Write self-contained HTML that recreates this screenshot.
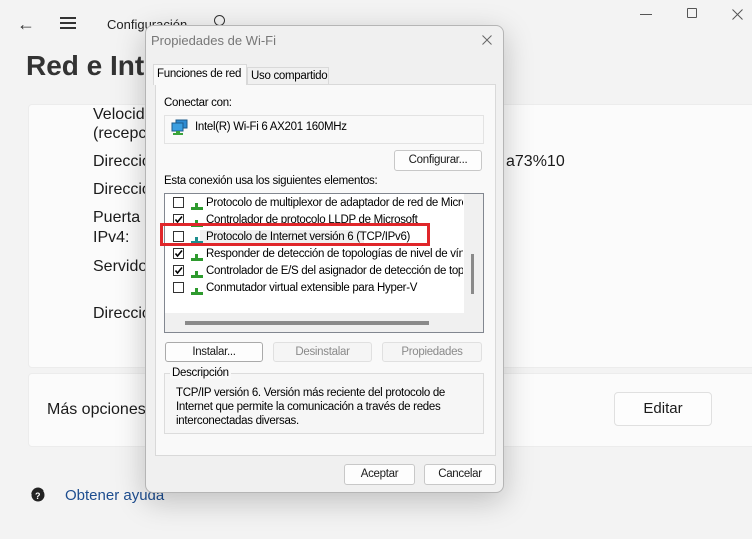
<!DOCTYPE html>
<html><head><meta charset="utf-8"><style>
*{margin:0;padding:0;box-sizing:border-box}
body{width:752px;height:539px;background:#f3f3f3;position:relative;overflow:hidden;font-family:"Liberation Sans",sans-serif;color:#1b1b1b}
.a{position:absolute;white-space:nowrap}
.s{font-size:16px;color:#1b1b1b}
.d{font-size:11.5px;color:#000;letter-spacing:-0.3px}
.btn{position:absolute;border:1px solid #c8c8c8;border-radius:3px;background:#fdfdfd;font-size:11.5px;text-align:center;line-height:18px;letter-spacing:-0.3px}
.cb{position:absolute;width:11px;height:11px;border:1px solid #333;background:#fff}
</style></head><body>
<div class="a" style="left:17px;top:14px;font-size:18px;color:#333">&#8592;</div>
<div class="a" style="left:60px;top:17px;width:16px;height:1.5px;background:#333;box-shadow:0 5px 0 #333,0 10px 0 #333"></div>
<div class="a" style="left:107px;top:17px;font-size:13px;color:#222">Configuración</div>
<div class="a" style="left:214px;top:15px;width:11px;height:11px;border:1.5px solid #333;border-radius:50%"></div>
<div class="a" style="left:640px;top:14px;width:12px;height:1px;background:#555"></div>
<div class="a" style="left:687px;top:8px;width:10px;height:10px;border:1px solid #555;border-radius:1px"></div>
<svg class="a" style="left:732px;top:9px" width="11" height="11"><path d="M0.5 0.5L10.5 10.5M10.5 0.5L0.5 10.5" stroke="#555" stroke-width="1"/></svg>
<div class="a" style="left:26px;top:50px;font-size:28px;font-weight:bold;color:#333">Red e Internet</div>
<div class="a" style="left:28px;top:104px;width:730px;height:264px;background:#fbfbfb;border:1px solid #ececec;border-radius:4px"></div>
<div class="a" style="left:28px;top:373px;width:730px;height:74px;background:#fbfbfb;border:1px solid #ececec;border-radius:4px"></div>
<div class="a s" style="left:93px;top:106px">Velocidad</div>
<div class="a s" style="left:93px;top:125px">(recepción)</div>
<div class="a s" style="left:93px;top:153px">Dirección</div>
<div class="a s" style="left:506px;top:153px">a73%10</div>
<div class="a s" style="left:93px;top:181px">Dirección</div>
<div class="a s" style="left:93px;top:209px">Puerta de</div>
<div class="a s" style="left:93px;top:229px">IPv4:</div>
<div class="a s" style="left:93px;top:258px">Servidor</div>
<div class="a s" style="left:93px;top:305px">Dirección</div>
<div class="a s" style="left:47px;top:401px">Más opciones</div>
<div class="a" style="left:614px;top:392px;width:98px;height:34px;background:#fdfdfd;border:1px solid #e0e0e0;border-radius:4px;font-size:15px;text-align:center;line-height:32px">Editar</div>
<svg class="a" style="left:29px;top:486px" width="17" height="17"><circle cx="9" cy="9" r="6.5" fill="#222"/><path d="M3 8a6 6 0 0 1 11-3" stroke="#222" stroke-width="1.5" fill="none"/><text x="6" y="13" font-size="9" fill="#fff" font-weight="bold" font-family="Liberation Sans">?</text></svg>
<div class="a" style="left:65px;top:487px;font-size:15px;color:#1d4d8f">Obtener ayuda</div>

<div class="a" style="left:145px;top:25px;width:359px;height:468px;background:#f0f0f0;border:1px solid #b5b5b5;border-radius:8px;box-shadow:0 8px 30px rgba(0,0,0,.22)"></div>
<div class="a" style="left:151px;top:33px;font-size:13px;color:#777">Propiedades de Wi-Fi</div>
<svg class="a" style="left:482px;top:35px" width="10" height="10"><path d="M0.5 0.5L9.5 9.5M9.5 0.5L0.5 9.5" stroke="#666" stroke-width="1"/></svg>
<div class="a" style="left:155px;top:84px;width:341px;height:372px;background:#f9f9f9;border:1px solid #d9d9d9"></div>
<div class="a" style="left:153px;top:64px;width:94px;height:21px;background:#f9f9f9;border:1px solid #d9d9d9;border-bottom:none"></div>
<div class="a d" style="left:157px;top:68px">Funciones de red</div>
<div class="a" style="left:247px;top:67px;width:82px;height:17px;background:#f0f0f0;border:1px solid #d9d9d9;border-bottom:none"></div>
<div class="a d" style="left:251px;top:70px">Uso compartido</div>
<div class="a d" style="left:164px;top:97px">Conectar con:</div>
<div class="a" style="left:164px;top:115px;width:320px;height:29px;border:1px solid #e3e3e3;background:#f9f9f9"></div>
<svg class="a" style="left:171px;top:119px" width="18" height="16" viewBox="0 0 18 16"><rect x="5" y="1" width="11" height="8" fill="#2d8bd2" stroke="#1b5a8a"/><rect x="1" y="4" width="11" height="8" fill="#3a9ee0" stroke="#1b5a8a"/><rect x="5" y="12" width="4" height="2" fill="#3aa33a"/><rect x="2" y="14" width="10" height="2" fill="#3aa33a"/></svg>
<div class="a d" style="left:195px;top:121px">Intel(R) Wi-Fi 6 AX201 160MHz</div>
<div class="btn" style="left:394px;top:150px;width:88px;height:21px">Configurar...</div>
<div class="a d" style="left:164px;top:175px">Esta conexión usa los siguientes elementos:</div>
<div class="a" style="left:164px;top:193px;width:320px;height:140px;border:1px solid #828790;background:#fff;overflow:hidden">
 <div class="a" style="left:299px;top:0;width:20px;height:119px;background:#f0f0f0"></div>
 <div class="a" style="left:306px;top:60px;width:3px;height:40px;background:#8a8a8a"></div>
 <div class="a" style="left:0;top:119px;width:320px;height:20px;background:#f0f0f0"></div>
 <div class="a" style="left:20px;top:127px;width:244px;height:4px;background:#8a8a8a"></div>
</div>
<div class="a" style="left:200px;top:230px;width:164px;height:16px;background:#f0f0f0"></div>
<div class="cb" style="left:173px;top:197px"></div>
<div class="cb" style="left:173px;top:214px"></div>
<div class="cb" style="left:173px;top:231px"></div>
<div class="cb" style="left:173px;top:248px"></div>
<div class="cb" style="left:173px;top:265px"></div>
<div class="cb" style="left:173px;top:282px"></div>
<svg class="a" style="left:173px;top:197px" width="11" height="85"><g stroke="#000" stroke-width="1.6" fill="none"><path d="M2.5 22.5L4.5 25L9 19.5"/><path d="M2.5 56.5L4.5 59L9 53.5"/><path d="M2.5 73.5L4.5 76L9 70.5"/></g></svg>
<svg class="a" style="left:190px;top:200px" width="14" height="105"><g fill="#2e9a2e"><rect x="5" y="3" width="3" height="4"/><rect x="1" y="7" width="12" height="3"/><rect x="5" y="20" width="3" height="4"/><rect x="1" y="24" width="12" height="3"/><rect x="5" y="54" width="3" height="4"/><rect x="1" y="58" width="12" height="3"/><rect x="5" y="71" width="3" height="4"/><rect x="1" y="75" width="12" height="3"/><rect x="5" y="88" width="3" height="4"/><rect x="1" y="92" width="12" height="3"/></g><g fill="#1e8f8f"><rect x="5" y="37" width="3" height="4"/><rect x="1" y="41" width="12" height="3"/></g></svg>
<div class="a d" style="left:206px;top:197px;width:257px;overflow:hidden">Protocolo de multiplexor de adaptador de red de Microsoft</div>
<div class="a d" style="left:206px;top:214px;width:257px;overflow:hidden">Controlador de protocolo LLDP de Microsoft</div>
<div class="a d" style="left:206px;top:231px">Protocolo de Internet versión 6 (TCP/IPv6)</div>
<div class="a d" style="left:206px;top:248px;width:257px;overflow:hidden">Responder de detección de topologías de nivel de vínculo</div>
<div class="a d" style="left:206px;top:265px;width:257px;overflow:hidden">Controlador de E/S del asignador de detección de topologías</div>
<div class="a d" style="left:206px;top:282px">Conmutador virtual extensible para Hyper-V</div>
<div class="a" style="left:160px;top:223px;width:270px;height:23px;border:3px solid #e0262a"></div>
<div class="btn" style="left:165px;top:342px;width:98px;height:20px;border-color:#aaa">Instalar...</div>
<div class="btn" style="left:273px;top:342px;width:99px;height:20px;color:#8a8a8a;border-color:#e0e0e0;background:#f5f5f5">Desinstalar</div>
<div class="btn" style="left:382px;top:342px;width:100px;height:20px;color:#8a8a8a;border-color:#e0e0e0;background:#f5f5f5">Propiedades</div>
<div class="a" style="left:164px;top:373px;width:320px;height:61px;border:1px solid #dcdcdc;background:#f6f6f6"></div>
<div class="a d" style="left:170px;top:367px;background:#f9f9f9;padding:0 2px">Descripción</div>
<div class="a d" style="left:176px;top:386px;line-height:14px">TCP/IP versión 6. Versión más reciente del protocolo de<br>Internet que permite la comunicación a través de redes<br>interconectadas diversas.</div>
<div class="btn" style="left:344px;top:464px;width:71px;height:21px">Aceptar</div>
<div class="btn" style="left:424px;top:464px;width:72px;height:21px">Cancelar</div>
</body></html>
